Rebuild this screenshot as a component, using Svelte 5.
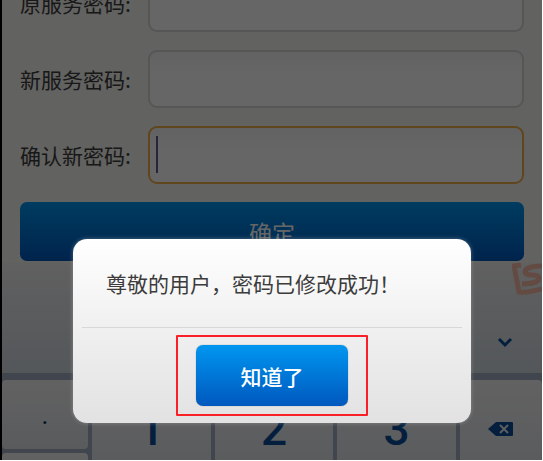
<script>
  const fields = [
    { id: "old-password", label: "原服务密码:" },
    { id: "new-password", label: "新服务密码:" },
    { id: "confirm-password", label: "确认新密码:", active: true },
  ];

  const digits = ["1", "2", "3"];

  let values = $state({});
  let open = $state(true);
</script>

<div class="screen">
  <form onsubmit={(e) => { e.preventDefault(); open = true; }}>
    {#each fields as field}
      <div class="row">
        <label for={field.id}>{field.label}</label>
        <div class="field" class:active={field.active}>
          <input id={field.id} type="password" bind:value={values[field.id]} />
        </div>
      </div>
    {/each}
    <button class="primary submit" type="submit">确定</button>
  </form>

  <div class="keyboard">
    <div class="toolbar">
      <svg class="logo" width="30" height="34" viewBox="0 0 30 34" aria-hidden="true">
        <path d="M9 2 L2 3 L7 29 Q16 30 30 26" />
        <path d="M30 3 C21 3 13 5 13 9 C13 14 27 10 27 15 C27 19 19 21 10 21" />
      </svg>
      <button class="collapse" type="button" aria-label="收起键盘">
        <svg width="16" height="12" viewBox="0 0 16 12">
          <path d="M2 2 L8 8 L14 2" />
        </svg>
      </button>
    </div>
    <div class="keys">
      <div class="symbols">
        <button class="key" type="button">.</button>
        <button class="key" type="button" aria-label="符号"></button>
      </div>
      {#each digits as digit}
        <button class="key digit" type="button">{digit}</button>
      {/each}
      <button class="key" type="button" aria-label="删除">
        <svg width="26" height="16" viewBox="0 0 26 16">
          <path class="shape" d="M8 1 H24 Q25 1 25 2 V14 Q25 15 24 15 H8 L0 8 Z" />
          <path class="cross" d="M12 4 L20 12 M20 4 L12 12" />
        </svg>
      </button>
    </div>
  </div>

  {#if open}
    <div class="scrim">
      <div class="dialog" role="alertdialog" aria-describedby="message">
        <p id="message">尊敬的用户，密码已修改成功！</p>
        <div class="actions">
          <div class="highlight">
            <button class="primary" type="button" onclick={() => (open = false)}>知道了</button>
          </div>
        </div>
      </div>
    </div>
  {/if}
</div>

<style>
  :global(body) {
    margin: 0;
    background: #fff;
  }

  .screen {
    position: relative;
    box-sizing: border-box;
    height: calc(100vh - 1px);
    margin-right: 1px;
    border-left: 2px solid #000;
    overflow: hidden;
    background: #f4f4f0;
    color: #3c3c3c;
    font-family: "Noto Sans CJK SC", sans-serif;
    font-size: 21px;
  }

  button,
  input {
    box-sizing: border-box;
    margin: 0;
    font: inherit;
  }

  button {
    padding: 0;
    border: 0;
    cursor: pointer;
  }

  /* scrolled up by half a field */
  form {
    display: flex;
    flex-direction: column;
    gap: 18px;
    margin-top: -26px;
    padding: 0 18px 2px;
  }

  .row {
    display: flex;
    align-items: center;
  }

  label {
    width: 128px;
    flex: none;
  }

  .field {
    position: relative;
    flex: 1;
  }

  input {
    display: block;
    width: 100%;
    height: 58px;
    padding: 0 8px;
    border: 2px solid #d6d6d6;
    border-radius: 9px;
    outline: none;
    background: linear-gradient(#f6f6f6, #fff 40%);
  }

  .active input {
    border-color: #f0b04a;
  }

  .active::after {
    content: "";
    position: absolute;
    left: 8px;
    top: 10px;
    width: 2px;
    height: 37px;
    background: #5c6096;
  }

  .primary {
    border-radius: 7px;
    background: linear-gradient(#0096f0, #0058be);
    color: #fff;
  }

  .submit {
    height: 59px;
    font-size: 23px;
  }

  .keyboard {
    background: #a2b0c2;
  }

  .toolbar {
    display: flex;
    flex-direction: column;
    justify-content: space-between;
    align-items: flex-end;
    height: 110px;
    background: linear-gradient(#f0f0f0, #d2dae2);
  }

  .logo {
    fill: none;
    stroke: #f8bca8;
    stroke-width: 5;
  }

  .collapse {
    display: grid;
    place-items: center;
    width: 75px;
    height: 60px;
    background: none;
  }

  .collapse path {
    fill: none;
    stroke: #0a4c9c;
    stroke-width: 3;
  }

  .keys {
    display: grid;
    grid-template-columns: 86px 1fr 1fr 1fr 82px;
    grid-auto-rows: 97px;
    gap: 4px;
    padding-top: 7px;
  }

  .symbols {
    display: grid;
    grid-auto-rows: 69px;
    gap: 4px;
  }

  .key {
    display: grid;
    place-items: center;
    border-radius: 4px;
    background: linear-gradient(#f4f4f4, #dfe3e8);
    color: #0a2c58;
    font-family: Roboto, sans-serif;
    font-size: 26px;
  }

  .digit {
    color: #0a4c9c;
    font-size: 46px;
    font-weight: 500;
  }

  .shape {
    fill: #0a4c9c;
  }

  .cross {
    fill: none;
    stroke: #e6eaee;
    stroke-width: 2;
  }

  .scrim {
    position: absolute;
    inset: 0;
    display: flex;
    align-items: flex-start;
    justify-content: center;
    padding: 239px 71px 0;
    background: rgba(0, 0, 0, 0.6);
  }

  .dialog {
    box-sizing: border-box;
    width: 100%;
    padding: 0 9px 7px;
    border-radius: 14px;
    background: linear-gradient(#fff, #f1f1f1 45%, #e2e2e2);
    box-shadow: 0 0 4px rgba(200, 210, 210, 0.4);
  }

  p {
    margin: 0;
    padding: 28px 24px;
    line-height: 32px;
  }

  .actions {
    display: flex;
    justify-content: center;
    padding-top: 7px;
    border-top: 1px solid #d8d8d8;
  }

  .highlight {
    padding: 8px 18px;
    border: 2px solid #fa2028;
    border-radius: 1px;
  }

  .highlight .primary {
    display: block;
    width: 152px;
    height: 61px;
    box-shadow: 0 0 1px #667;
    font-weight: 500;
  }
</style>
